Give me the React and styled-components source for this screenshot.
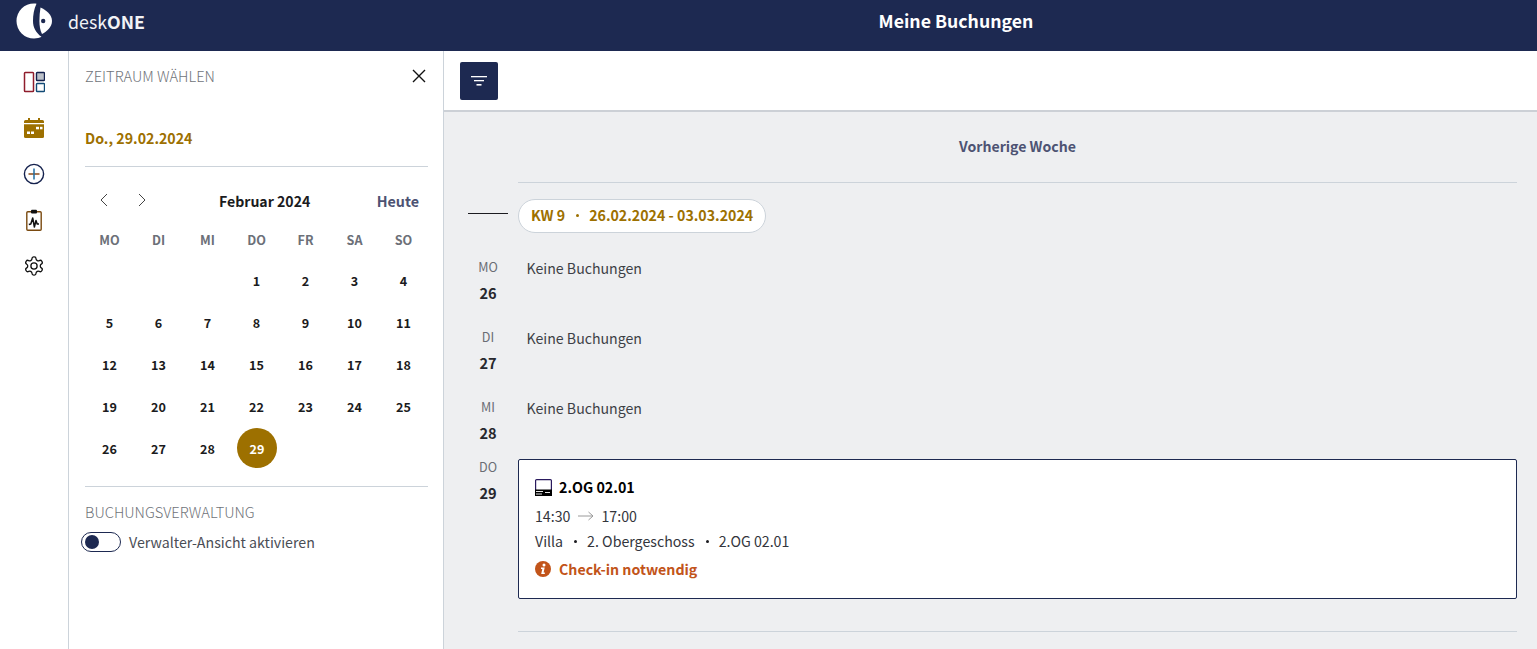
import React from "react";
import styled, { createGlobalStyle } from "styled-components";

const Global = createGlobalStyle`
  html, body { margin: 0; padding: 0; height: 100%; overflow: hidden; }
  body { font-family: "Noto Sans CJK SC", "Noto Sans", "Liberation Sans", sans-serif; font-size: 14.2px; color: #27272d; background: #fff; }
  * { box-sizing: border-box; }
`;

const Page = styled.div`
  display: flex; flex-direction: column; width: 1537px; height: 649px; overflow: hidden;
`;
const Header = styled.header`
  display: grid; grid-template-columns: 444px 1fr; height: 51px; background: #1d2951; color: #fff; flex: none;
`;
const Brand = styled.div`
  display: flex; align-items: flex-start; padding: 3px 0 0 16px; gap: 15px;
`;
const BrandName = styled.span`
  font-size: 17.8px; line-height: 36px; color: #f2f3f6;
  b { font-weight: 700; }
`;
const Title = styled.h1`
  margin: 0; font-size: 17.7px; font-weight: 700; line-height: 41px; text-align: center; padding-right: 69px;
`;
const Body = styled.div`
  display: flex; flex: 1; min-height: 0;
`;
const Rail = styled.nav`
  width: 69px; flex: none; border-right: 1px solid #ccd3da; display: flex; flex-direction: column; align-items: center;
  padding: 20px 1px 0 0; gap: 24px;
`;
const RailIcon = styled.svg`
  width: 22px; height: 22px; display: block;
`;
const Panel = styled.aside`
  width: 375px; flex: none; border-right: 1px solid #ccd3da; padding: 0 15px 0 16px; display: flex; flex-direction: column;
`;
const PanelHead = styled.div`
  display: flex; justify-content: space-between; align-items: center; height: 50px; padding-right: 2px;
`;
const SectionLabel = styled.div`
  font-size: 14.65px; line-height: 20px; color: #6f7379; font-weight: 300;
`;
const CloseBtn = styled.svg`
  width: 14px; height: 14px; display: block;
`;
const DateLabel = styled.div`
  margin-top: 26px; font-size: 14.2px; line-height: 22px; font-weight: 700; color: #9d7000;
`;
const Rule = styled.hr`
  margin: 0; border: none; border-top: 1px solid ${p => p.$c || "#ccd3da"};
`;
const DateRule = styled(Rule)`
  margin-top: 17px;
`;
const CalHead = styled.div`
  display: flex; align-items: center; height: 30px; margin-top: 18px; padding: 0 9px 0 13px;
`;
const Chevron = styled.svg`
  width: 12px; height: 14px; display: block; margin-right: ${p => p.$mr || 0}px;
`;
const Month = styled.div`
  font-size: 14.1px; font-weight: 700; color: #1b1b20; margin-left: 71px; flex: 1; padding-top: 1px;
`;
const Today = styled.div`
  font-size: 14.3px; font-weight: 700; color: #4d5373;
`;
const CalGrid = styled.div`
  display: grid; grid-template-columns: repeat(7, 49px); grid-auto-rows: 42px; margin-top: 2px;
`;
const WeekDay = styled.div`
  display: flex; align-items: center; justify-content: center; font-size: 12.6px; font-weight: 700; color: #6c7078; padding-top: 2px;
`;
const DayCell = styled.div`
  display: flex; align-items: center; justify-content: center; font-size: 12.6px; font-weight: 700; color: #1b1b20;
`;
const Selected = styled.span`
  display: flex; align-items: center; justify-content: center; width: 40px; height: 40px; border-radius: 50%;
  background: #9d7000; color: #fff; margin-left: 1px;
`;
const WeekRow = styled.div`
  display: contents;
`;
const CalRule = styled(Rule)`
  margin-top: 17px;
`;
const ManageLabel = styled(SectionLabel)`
  margin-top: 15px;
`;
const ToggleRow = styled.div`
  display: flex; align-items: center; gap: 8px; margin: 10px 0 0 -4px;
`;
const Toggle = styled.div`
  width: 40px; height: 20px; border: 1px solid #1d2951; border-radius: 10px; display: flex; align-items: center; padding-left: 3px; background: #fff;
  &::before { content: ""; width: 14px; height: 14px; border-radius: 50%; background: #1d2951; }
`;
const ToggleText = styled.span`
  font-size: 14.2px; line-height: 20px; color: #4a4d55; margin-top: -1px;
`;
const Main = styled.main`
  flex: 1; min-width: 0; background: #eeeff1; display: flex; flex-direction: column;
`;
const Toolbar = styled.div`
  height: 61px; flex: none; background: #fff; border-bottom: 2px solid #ccd0d6; padding: 11px 16px;
`;
const FilterBtn = styled.button`
  width: 38px; height: 38px; border: none; border-radius: 2px; background: #1d2951; display: flex; align-items: center; justify-content: center; padding: 0;
`;
const Timeline = styled.div`
  padding: 0 20px 0 24px; flex: 1;
`;
const PrevWeek = styled.div`
  text-align: center; font-size: 14.1px; font-weight: 700; color: #4d5373; line-height: 22px; padding: 23px 0 0 50px; height: 70px;
`;
const WeekHeader = styled.div`
  margin-left: 50px; border-top: 1px solid #ccd3da; padding-top: 16px; position: relative;
`;
const WeekTick = styled.span`
  position: absolute; left: -50px; top: 30px; width: 40px; height: 1px; background: #1b1b20;
`;
const Pill = styled.div`
  display: inline-flex; align-items: center; height: 34px; border: 1px solid #ccd3da; border-radius: 17px; background: #fff;
  padding: 0 12px 2px; font-size: 14.2px; font-weight: 700; color: #9d7000;
`;
const Dot = styled.span`
  width: 3px; height: 3px; border-radius: 50%; background: ${p => p.$c || "#9d7000"}; margin: 0 10px 0 11px; flex: none;
`;
const Days = styled.div`
  margin-top: 19px; display: flex; flex-direction: column;
`;
const DayRow = styled.div`
  display: grid; grid-template-columns: 40px 1fr; column-gap: 10px; min-height: 70px;
  &:nth-child(3) { min-height: 67px; }
`;
const DayLabel = styled.div`
  text-align: center; display: flex; flex-direction: column; align-items: center;
`;
const DayName = styled.span`
  font-size: 12.6px; line-height: 18px; color: #6a6d74; margin-top: ${p => p.$mt ?? 6}px;
`;
const DayNum = styled.span`
  font-size: 14.6px; line-height: 20px; font-weight: 700; color: #27272d; margin-top: 7px;
`;
const Empty = styled.div`
  padding: 6px 0 0 8.5px; font-size: 14.15px; line-height: 20px; color: #3d3f46;
`;
const Card = styled.div`
  height: 140px; background: #fff; border: 1px solid #1d2951; border-radius: 2px; padding: 16px 16px 0;
`;
const CardTitle = styled.div`
  display: flex; align-items: center; gap: 7px; font-size: 14.25px; line-height: 22px; font-weight: 700; color: #000;
`;
const CardLine = styled.div`
  display: flex; align-items: center; font-size: 14.2px; line-height: 20px; color: #33353c; margin-top: ${p => p.$mt}px;
`;
const Alert = styled.div`
  display: flex; align-items: center; gap: 8px; font-size: 14.2px; line-height: 22px; font-weight: 700; color: #c2541a; margin-top: 7px;
`;
const BottomRule = styled(Rule)`
  margin: 32px 0 0 50px;
`;

const weeks = [
  [null, null, null, 1, 2, 3, 4],
  [5, 6, 7, 8, 9, 10, 11],
  [12, 13, 14, 15, 16, 17, 18],
  [19, 20, 21, 22, 23, 24, 25],
  [26, 27, 28, 29, null, null, null],
];
const emptyDays = [["MO", 26], ["DI", 27], ["MI", 28]];

const Logo = () => (
  <svg width="37" height="37" viewBox="0 0 37 37" style={{ display: "block", flex: "none" }}>
    <path d="M18 0.5 C19 0.5 20 0.6 20.5 0.8 C18 6 17 12 17 18 C17 24 19.5 29.5 25.5 33.8 C23.5 35 21 35.5 18 35.5 A17.5 17.5 0 1 1 18 0.5 Z" fill="#fff" />
    <path d="M24.5 4.5 C30 7 36 11.5 36 18 C36 24 31 28.5 26 31 C24 27 23.4 22.5 23.4 18 C23.4 13.5 23.8 9 24.5 4.5 Z" fill="#fff" />
    <circle cx="27.2" cy="18" r="2.2" fill="#1d2951" />
  </svg>
);

const LayoutIcon = () => (
  <RailIcon viewBox="0 0 22 22" fill="none">
    <rect x="1.5" y="1.5" width="9" height="19" rx="0.8" stroke="#8f1d2c" strokeWidth="1.5" />
    <rect x="13.5" y="1.5" width="8" height="8" rx="0.8" stroke="#14214d" strokeWidth="1.4" fill="#bcc1c9" />
    <rect x="13.5" y="12.5" width="8" height="8" rx="0.8" stroke="#114a75" strokeWidth="1.4" />
  </RailIcon>
);
const CalIcon = () => (
  <RailIcon viewBox="0 0 22 22">
    <path d="M5 1h2v2h8V1h2v2h2.5A1.5 1.5 0 0 1 21 4.5V6H1V4.5A1.5 1.5 0 0 1 2.5 3H5z" fill="#9d7000" />
    <path d="M1 7.2h20V19.5a1.5 1.5 0 0 1-1.5 1.5h-17A1.5 1.5 0 0 1 1 19.5z" fill="#9d7000" />
    <rect x="4" y="14.5" width="3" height="2.5" fill="#fff" />
    <rect x="8" y="14.5" width="3" height="2.5" fill="#fff" />
    <rect x="13" y="9.8" width="3" height="2.5" fill="#fff" />
    <rect x="17" y="9.8" width="2.5" height="2.5" fill="#fff" />
  </RailIcon>
);
const PlusIcon = () => (
  <RailIcon viewBox="0 0 22 22" fill="none">
    <circle cx="11" cy="11" r="9.6" stroke="#14214d" strokeWidth="1.4" />
    <path d="M5.5 11h11" stroke="#8a4a1a" strokeWidth="1.5" />
    <path d="M11 5.5v11" stroke="#1f6ea3" strokeWidth="1.5" />
  </RailIcon>
);
const ReportIcon = () => (
  <RailIcon viewBox="0 0 22 22" fill="none">
    <rect x="3.8" y="2.8" width="14.4" height="18.4" rx="1" stroke="#7a4a10" strokeWidth="1.4" />
    <rect x="8" y="0.8" width="6" height="3.6" rx="1" fill="#111" />
    <path d="M5.8 15.5l2-.5 1.9-6 1.7 9 1.6-6.5 1.2 3.5h1.8" stroke="#111" strokeWidth="1.5" strokeLinejoin="round" />
  </RailIcon>
);
const GearIcon = () => (
  <RailIcon viewBox="0 0 24 24" fill="none" stroke="#111" strokeWidth="1.4" strokeLinecap="round" strokeLinejoin="round">
    <path d="M12.22 2h-.44a2 2 0 0 0-2 2v.18a2 2 0 0 1-1 1.73l-.43.25a2 2 0 0 1-2 0l-.15-.08a2 2 0 0 0-2.73.73l-.22.38a2 2 0 0 0 .73 2.73l.15.1a2 2 0 0 1 1 1.72v.51a2 2 0 0 1-1 1.74l-.15.09a2 2 0 0 0-.73 2.73l.22.38a2 2 0 0 0 2.73.73l.15-.08a2 2 0 0 1 2 0l.43.25a2 2 0 0 1 1 1.73V20a2 2 0 0 0 2 2h.44a2 2 0 0 0 2-2v-.18a2 2 0 0 1 1-1.73l.43-.25a2 2 0 0 1 2 0l.15.08a2 2 0 0 0 2.73-.73l.22-.39a2 2 0 0 0-.73-2.73l-.15-.08a2 2 0 0 1-1-1.74v-.5a2 2 0 0 1 1-1.74l.15-.09a2 2 0 0 0 .73-2.73l-.22-.38a2 2 0 0 0-2.73-.73l-.15.08a2 2 0 0 1-2 0l-.43-.25a2 2 0 0 1-1-1.73V4a2 2 0 0 0-2-2z" />
    <circle cx="12" cy="12" r="3.4" />
  </RailIcon>
);
const DeskIcon = () => (
  <svg width="17" height="17" viewBox="0 0 17 17" style={{ display: "block", flex: "none" }}>
    <rect x="0.6" y="0.6" width="15.8" height="11" rx="1" fill="#fff" stroke="#2a1a5e" strokeWidth="1.2" />
    <rect x="0" y="10.5" width="17" height="6.5" fill="#000" />
    <path d="M1 12.5h7M1 15h6M10 13.5h5" stroke="#fff" strokeWidth="0.9" />
  </svg>
);
const InfoIcon = () => (
  <svg width="16" height="16" viewBox="0 0 16 16" style={{ display: "block", flex: "none" }}>
    <circle cx="8" cy="8" r="8" fill="#c2541a" />
    <circle cx="9" cy="3.9" r="1.5" fill="#fff" />
    <path d="M6 6.6h3.7L8.6 11.6h1.2v1.4H6.2l1.1-5H6z" fill="#fff" />
  </svg>
);

export default function App() {
  return (
    <Page>
      <Global />
      <Header>
        <Brand>
          <Logo />
          <BrandName>desk<b>ONE</b></BrandName>
        </Brand>
        <Title>Meine Buchungen</Title>
      </Header>
      <Body>
        <Rail>
          <LayoutIcon />
          <CalIcon />
          <PlusIcon />
          <ReportIcon />
          <GearIcon />
        </Rail>
        <Panel>
          <PanelHead>
            <SectionLabel>ZEITRAUM WÄHLEN</SectionLabel>
            <CloseBtn viewBox="0 0 14 14" fill="none">
              <path d="M1 1l12 12M13 1L1 13" stroke="#111" strokeWidth="1.4" />
            </CloseBtn>
          </PanelHead>
          <DateLabel>Do., 29.02.2024</DateLabel>
          <DateRule />
          <CalHead>
            <Chevron viewBox="0 0 12 14" fill="none" $mr={26}>
              <path d="M9 1L3 7l6 6" stroke="#444" strokeWidth="1" />
            </Chevron>
            <Chevron viewBox="0 0 12 14" fill="none">
              <path d="M3 1l6 6-6 6" stroke="#444" strokeWidth="1" />
            </Chevron>
            <Month>Februar 2024</Month>
            <Today>Heute</Today>
          </CalHead>
          <CalGrid>
            <WeekRow>
              {["MO", "DI", "MI", "DO", "FR", "SA", "SO"].map(d => <WeekDay key={d}>{d}</WeekDay>)}
            </WeekRow>
            {weeks.map((w, i) => (
              <WeekRow key={i}>
                {w.map((d, j) => (
                  <DayCell key={j}>{d === 29 ? <Selected>29</Selected> : d}</DayCell>
                ))}
              </WeekRow>
            ))}
          </CalGrid>
          <CalRule />
          <ManageLabel>BUCHUNGSVERWALTUNG</ManageLabel>
          <ToggleRow>
            <Toggle />
            <ToggleText>Verwalter-Ansicht aktivieren</ToggleText>
          </ToggleRow>
        </Panel>
        <Main>
          <Toolbar>
            <FilterBtn aria-label="Filter">
              <svg width="16" height="10" viewBox="0 0 16 10" fill="#fff">
                <rect x="0" y="0" width="16" height="1.3" />
                <rect x="3" y="4" width="10" height="1.3" />
                <rect x="5.5" y="8" width="5" height="1.6" />
              </svg>
            </FilterBtn>
          </Toolbar>
          <Timeline>
            <PrevWeek>Vorherige Woche</PrevWeek>
            <WeekHeader>
              <WeekTick />
              <Pill>KW 9<Dot />26.02.2024 - 03.03.2024</Pill>
            </WeekHeader>
            <Days>
              {emptyDays.map(([n, d]) => (
                <DayRow key={n}>
                  <DayLabel>
                    <DayName>{n}</DayName>
                    <DayNum>{d}</DayNum>
                  </DayLabel>
                  <Empty>Keine Buchungen</Empty>
                </DayRow>
              ))}
              <DayRow>
                <DayLabel>
                  <DayName $mt={-1}>DO</DayName>
                  <DayNum>29</DayNum>
                </DayLabel>
                <Card>
                  <CardTitle><DeskIcon />2.OG 02.01</CardTitle>
                  <CardLine $mt={8}>
                    14:30
                    <svg width="16" height="10" viewBox="0 0 16 10" fill="none" style={{ margin: "0 7.5px" }}>
                      <path d="M0 5h15M10.5 1l4.5 4-4.5 4" stroke="#9a9a9a" strokeWidth="1" />
                    </svg>
                    17:00
                  </CardLine>
                  <CardLine $mt={5}>
                    Villa<Dot $c="#1b1b20" />2. Obergeschoss<Dot $c="#1b1b20" />2.OG 02.01
                  </CardLine>
                  <Alert><InfoIcon />Check-in notwendig</Alert>
                </Card>
              </DayRow>
            </Days>
            <BottomRule />
          </Timeline>
        </Main>
      </Body>
    </Page>
  );
}
